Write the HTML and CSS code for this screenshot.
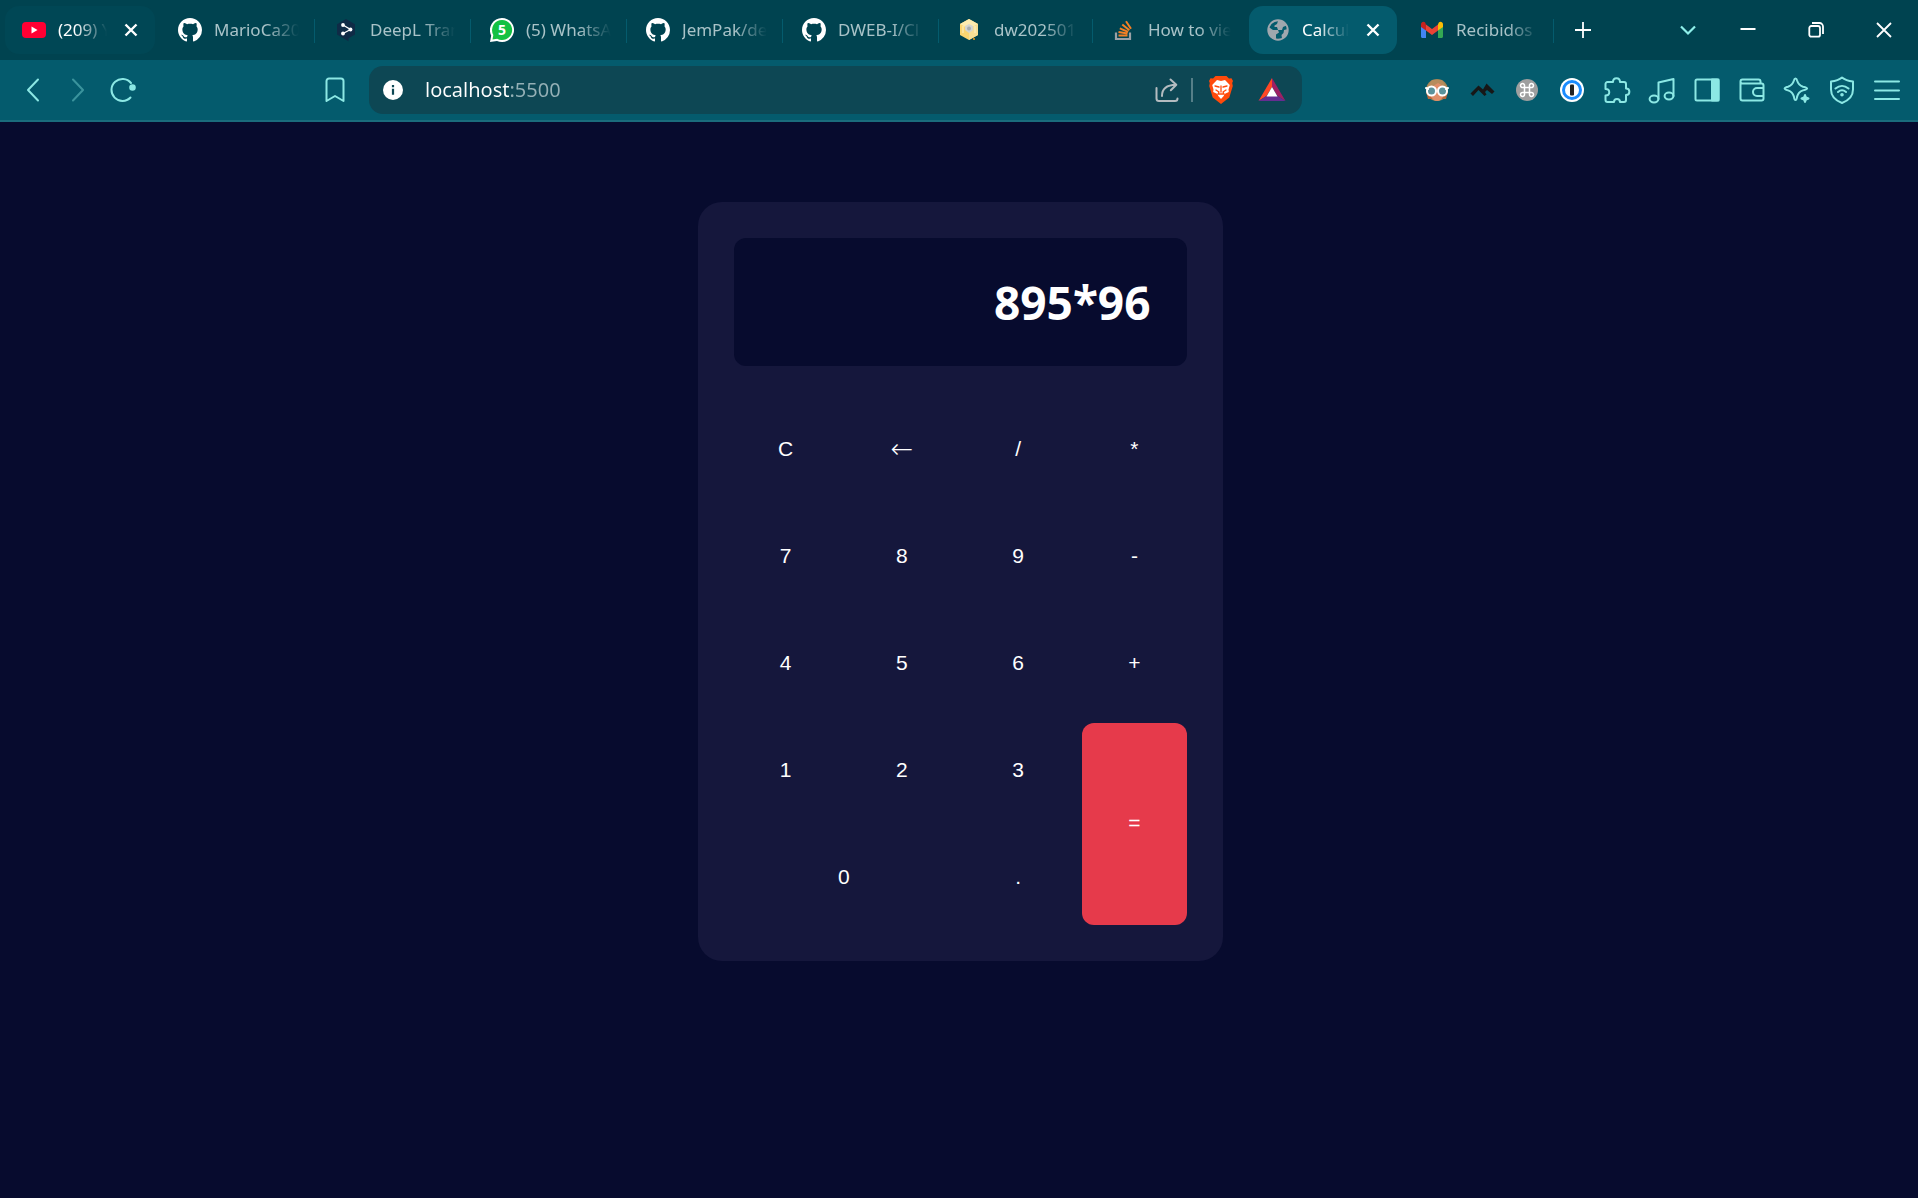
FILE: index.html
```html
<!DOCTYPE html>
<html lang="es">
<head>
<meta charset="utf-8">
<meta name="viewport" content="width=device-width, initial-scale=1">
<title>Calculadora</title>
<link rel="stylesheet" href="styles.css">
</head>
<body>
<svg class="symbols" aria-hidden="true">
  <symbol id="github" viewBox="0 0 16 16"><path fill="#fff" d="M8 0C3.58 0 0 3.58 0 8c0 3.54 2.29 6.53 5.47 7.59.4.07.55-.17.55-.38 0-.19-.01-.82-.01-1.49-2.01.37-2.53-.49-2.69-.94-.09-.23-.48-.94-.82-1.13-.28-.15-.68-.52-.01-.53.63-.01 1.08.58 1.23.82.72 1.21 1.87.87 2.33.66.07-.52.28-.87.51-1.07-1.78-.2-3.64-.89-3.64-3.95 0-.87.31-1.59.82-2.15-.08-.2-.36-1.02.08-2.12 0 0 .67-.21 2.2.82.64-.18 1.32-.27 2-.27s1.36.09 2 .27c1.53-1.04 2.2-.82 2.2-.82.44 1.1.16 1.92.08 2.12.51.56.82 1.27.82 2.15 0 3.07-1.87 3.75-3.65 3.95.29.25.54.73.54 1.48 0 1.07-.01 1.93-.01 2.2 0 .21.15.46.55.38A8.01 8.01 0 0 0 16 8c0-4.42-3.58-8-8-8z"/></symbol>
  <symbol id="cross" viewBox="0 0 24 24"><path d="M6.500 6.500l11 11M17.500 6.500l-11 11" fill="none" stroke="#fff" stroke-width="2.400"/></symbol>
</svg>

<header class="browser">
  <div class="tabbar">
    <nav class="tabs" aria-label="Pestañas">
      <div class="tab tab-hover">
        <svg class="favicon" viewBox="0 0 24 24"><rect y="4" width="24" height="16" rx="4" fill="#ff0033"/><path d="M9.500 8.500v7l6-3.500z" fill="#fff"/></svg>
        <span class="title">(209) Y</span>
        <button class="close" aria-label="Cerrar"><svg class="favicon"><use href="#cross"/></svg></button>
      </div>
      <div class="tab">
        <svg class="favicon"><use href="#github"/></svg>
        <span class="title">MarioCa20</span>
      </div>
      <div class="tab divided">
        <svg class="favicon" viewBox="0 0 24 24"><path d="M12 1l9 5.200v10.300L14.500 20.200v3L3 16.500V6.200z" fill="#0f2b46"/><path d="M9 7l7.500 4.500L9 15.500" fill="none" stroke="#fff" stroke-width="1.300"/><circle cx="9" cy="7" r="1.900" fill="#fff"/><circle cx="16.500" cy="11.500" r="1.900" fill="#fff"/><circle cx="9" cy="15.500" r="1.900" fill="#fff"/></svg>
        <span class="title">DeepL Tran</span>
      </div>
      <div class="tab divided">
        <svg class="favicon" viewBox="0 0 24 24"><path d="M12 0a12 12 0 1 1-5 22.900L0 24l1.200-6.600A12 12 0 0 1 12 0z" fill="#fff"/><path d="M12 2a10 10 0 1 1-4.800 18.700L2.500 21.500l.8-4.600A10 10 0 0 1 12 2z" fill="#13c143"/><text x="12" y="17" class="badge">5</text></svg>
        <span class="title">(5) WhatsA</span>
      </div>
      <div class="tab divided">
        <svg class="favicon"><use href="#github"/></svg>
        <span class="title">JemPak/de</span>
      </div>
      <div class="tab divided">
        <svg class="favicon"><use href="#github"/></svg>
        <span class="title">DWEB-I/Cl</span>
      </div>
      <div class="tab divided">
        <svg class="favicon" viewBox="0 0 24 24"><path d="M11 1l9 5v11l-9 5-9-5V6z" fill="#fbd571"/><path d="M11 1l9 5-9 5-9-5z" fill="#fdebb0"/><path d="M11 11l9-5v11l-9 5z" fill="#f8df95"/><path d="M7 8l4-2 4 2v4l-4 3-4-3z" fill="#d5d5cf"/><circle cx="11" cy="10.500" r="2" fill="#a8adb0"/><path d="M5 8v7M17 8v7" stroke="#fff3c8" stroke-width="1"/><circle cx="16" cy="21" r="1" fill="#f39c12"/></svg>
        <span class="title">dw202501</span>
      </div>
      <div class="tab divided">
        <svg class="favicon" viewBox="0 0 24 24"><path d="M4 14.500V21h14v-6.500" fill="none" stroke="#9aa1a6" stroke-width="2.200"/><path d="M6.500 17.500h9M6.500 14l9 1.500M7.800 10.300l8.300 3.500M10.300 6.500l7 5.800M14 3.200l5 7.500" fill="none" stroke="#f48024" stroke-width="2"/></svg>
        <span class="title">How to vie</span>
      </div>
      <div class="tab tab-active" aria-current="page">
        <svg class="favicon" viewBox="0 0 24 24"><circle cx="12" cy="12" r="9.700" fill="none" stroke="#a0a7ae" stroke-width="2"/><path d="M2.500 9l4.500 3h5l1 2.500-3 2v5C5 21 1.500 16 2.500 9zM14 2.500c3 .5 5.500 2.500 6.500 5L17 9l-1 3h-4l-1-3H8.500V7.500L11 6l1-3z M18 12l4-1c0 4-2 8-6 9.500l-.5-3.500 2-2z" fill="#a0a7ae"/></svg>
        <span class="title">Calcul</span>
        <button class="close" aria-label="Cerrar"><svg class="favicon"><use href="#cross"/></svg></button>
      </div>
      <div class="tab divided">
        <svg class="favicon" viewBox="0 0 24 24"><path d="M1 6v12.500c0 .8.600 1.500 1.500 1.500H6V10z" fill="#4285f4"/><path d="M23 6v12.500c0 .8-.6 1.500-1.500 1.500H18V10z" fill="#34a853"/><path d="M18 6.300V12.500L23 9V6.200c0-2.400-2.600-3.200-4-2z" fill="#fbbc04"/><path d="M6 12.500V6.500l6 4.500 6-4.500v6L12 17z" fill="#ea4335"/><path d="M1 6.200V9l5 3.500V6.500L5 4.200C3.400 3 1 3.800 1 6.200z" fill="#c5221f"/></svg>
        <span class="title">Recibidos</span>
      </div>
    </nav>
    <button class="new-tab" aria-label="Nueva pestaña"><svg class="glyph" viewBox="0 0 24 24"><path d="M12 4v16M4 12h16" stroke="#fff" stroke-width="1.800"/></svg></button>
    <div class="window-controls">
      <button class="tab-search" aria-label="Buscar pestañas"><svg class="glyph" viewBox="0 0 24 24"><path d="M5 8.500l7 7 7-7" fill="none" stroke="#8ff0ea" stroke-width="2.200"/></svg></button>
      <button class="control" aria-label="Minimizar"><svg class="glyph" viewBox="0 0 24 24"><path d="M4.500 11h15" stroke="#fff" stroke-width="2"/></svg></button>
      <button class="control" aria-label="Restaurar"><svg class="glyph" viewBox="0 0 24 24" fill="none" stroke="#fff" stroke-width="1.800"><rect x="5.300" y="8" width="10.700" height="10.700" rx="2"/><path d="M8 5h7.500A3.500 3.500 0 0 1 19 8.500V16"/></svg></button>
      <button class="control" aria-label="Cerrar ventana"><svg class="glyph" viewBox="0 0 24 24"><path d="M5 5l14 14M19 5L5 19" stroke="#fff" stroke-width="1.800"/></svg></button>
    </div>
  </div>

  <div class="toolbar">
    <div class="group">
      <button class="tool" aria-label="Atrás"><svg class="icon" viewBox="0 0 28 28"><path d="M19 3.500L9 14l10 10.500"/></svg></button>
      <button class="tool dim" aria-label="Adelante"><svg class="icon" viewBox="0 0 28 28"><path d="M9 3.500L19 14 9 24.500"/></svg></button>
      <button class="tool" aria-label="Recargar"><svg class="icon" viewBox="0 0 28 28"><path d="M22 7A11 11 0 1 0 21.500 21.500"/><circle cx="23.500" cy="11.500" r="2.300" class="solid"/></svg></button>
    </div>
    <div class="location">
      <button class="tool" aria-label="Marcador"><svg class="icon" viewBox="0 0 28 28"><path d="M5.500 25V5a2.500 2.500 0 0 1 2.500-2.500h12A2.500 2.500 0 0 1 22.500 5v20L14 20z"/></svg></button>
      <div class="address">
        <svg class="info" viewBox="0 0 20 20"><circle cx="10" cy="10" r="10" fill="#fff"/><path d="M10 8.800v6M10 5v2.200" stroke="#0d4754" stroke-width="2.200"/></svg>
        <input class="url" type="text" value="localhost:5500" aria-label="Dirección">
        <button class="share" aria-label="Compartir"><svg class="icon" viewBox="0 0 28 28"><path d="M3.500 12v10.500A2.500 2.500 0 0 0 6 25h16a2.500 2.500 0 0 0 2.500-2.500M9 20c0-7 4.500-11 14-11.200M17.500 3.500l5.800 5.300-5.500 5.500"/></svg></button>
        <span class="rule"></span>
        <button class="badge-button" aria-label="Brave Shields"><svg class="icon" viewBox="0 0 28 28"><path class="plain" d="M8.500 0h11l2.500 2.500 2.500-.2L26 5l-.8 2 .6 3-3.500 11.500L14 28 5.700 21.500 2.200 10l.6-3L2 5l1.500-2.700 2.500.2z" fill="#ff4a0b"/><path class="plain" d="M14 5l4-1 4.800 5-1.300 4.500.3 2.500-4.300 2-.8 2-2.700 3-2.700-3-.8-2-4.300-2 .3-2.500L5.200 9 10 4z" fill="#fff"/><path d="M8 10l4 1M20 10l-4 1M14 10v6M9 14l3 2-1 2h6l-1-2 3-2" stroke="#ff4a0b" stroke-width="1.300"/></svg></button>
        <button class="badge-button" aria-label="Recompensas"><svg class="icon" viewBox="0 0 28 28"><path class="plain" d="M14 2L.5 25l8-5L14 11z" fill="#ff4724"/><path class="plain" d="M14 2l13.500 23-8-5L14 11z" fill="#9e1f63"/><path class="plain" d="M.5 25h27l-8-5h-11z" fill="#662d91"/><path class="plain" d="M14 11l5.500 9.500h-11z" fill="#fff"/></svg></button>
      </div>
    </div>
    <div class="group">
      <button class="tool" aria-label="Extensión de lectura"><svg class="icon" viewBox="0 0 28 28"><circle class="plain" cx="14" cy="14" r="11" fill="#a98656"/><path class="plain" d="M3 16l2 7h5l-3-8zM25 16l-2 7h-5l3-8z" fill="#b5683d"/><path class="plain" d="M14 6c6 3 9 8 7 13-2 4-4 6-7 6s-5-2-7-6c-1-5 2-9 7-13z" fill="#e08e69"/><path class="plain" d="M9 4h10l4 7-8-4-8 5-3-1z" fill="#b68c5c"/><circle class="plain" cx="8.500" cy="15" r="4.500" fill="#5a929b"/><circle class="plain" cx="19.500" cy="15" r="4.500" fill="#5a929b"/><circle cx="8.500" cy="15" r="4.500" stroke="#fff"/><circle cx="19.500" cy="15" r="4.500" stroke="#fff"/><path d="M3 12l2 1M25 12l-2 1" stroke="#fff"/></svg></button>
      <button class="tool" aria-label="Extensión de montañas"><svg class="icon" viewBox="0 0 28 28"><path class="plain" d="M2.500 17.500l8-8 4.500 4 3.500-6 8 8-2.500 2.500-5-4-2 2 1.500 2.500-2 1.500-6-6-5.500 6z" fill="#171717"/></svg></button>
      <button class="tool" aria-label="Extensión de comandos"><svg class="icon" viewBox="0 0 28 28"><circle class="plain" cx="14" cy="14" r="11" fill="#9f9f9f"/><path d="M11.500 11.500h5v5h-5zM11.500 11.500H9.800a2 2 0 1 1 1.700-1.700zM16.500 11.500V9.800a2 2 0 1 1 1.700 1.700zM16.500 16.500h1.700a2 2 0 1 1-1.700 1.700zM11.500 16.500v1.700a2 2 0 1 1-1.700-1.700z" stroke="#fff" stroke-width="1.500"/></svg></button>
      <button class="tool" aria-label="Gestor de contraseñas"><svg class="icon" viewBox="0 0 28 28"><circle class="plain" cx="14" cy="14" r="12" fill="#fff"/><circle cx="14" cy="14" r="8.500" stroke="#1a8cff" stroke-width="3"/><rect class="plain" x="12" y="8.500" width="4" height="11" rx="1" fill="#222"/></svg></button>
      <button class="tool" aria-label="Extensiones"><svg class="icon" viewBox="0 0 28 28"><path d="M4.500 6H10c0-5 7-5 7 0h4a2 2 0 0 1 2 2v4.500c4.500 0 4.500 6.500 0 6.500v5a2 2 0 0 1-2 2h-4c0-4-6-4-6 0H4.500a2 2 0 0 1-2-2v-4.500c5 0 5-6.500 0-6.500V8a2 2 0 0 1 2-2z"/></svg></button>
      <button class="tool" aria-label="Música"><svg class="icon" viewBox="0 0 28 28"><path d="M10.500 23V6.500L25.500 3v17"/><ellipse cx="6" cy="23" rx="4.400" ry="3.400"/><ellipse cx="21" cy="20" rx="4.400" ry="3.400"/></svg></button>
      <button class="tool" aria-label="Panel lateral"><svg class="icon" viewBox="0 0 28 28"><rect x="2.500" y="3.500" width="23" height="21" rx="1.500"/><path class="solid" d="M19 3.500h6.500v21H19z"/></svg></button>
      <button class="tool" aria-label="Cartera"><svg class="icon" viewBox="0 0 28 28"><path d="M22.500 7V5.500a2 2 0 0 0-2-2H4.500a2 2 0 0 0 0 4h19a2 2 0 0 1 2 2v13a2 2 0 0 1-2 2h-19a2 2 0 0 1-2-2V5.500M25.500 12H19a4 4 0 0 0 0 8h6.500"/></svg></button>
      <button class="tool" aria-label="Asistente"><svg class="icon" viewBox="0 0 28 28"><path d="M12.500 2.500c1 0 1.300.8 1.600 2 1.100 3.800 2.400 5 5.900 6.200 5.500 1.300 5.500 2.400 0 3.700-3.500 1.200-4.800 2.400-5.900 6.200-.6 4.500-2.600 4.500-3.200 0-1.100-3.800-2.400-5-5.900-6.200-4.500-1.300-4.500-2.400 0-3.700 3.500-1.200 4.800-2.400 5.900-6.200.3-1.200.6-2 1.600-2z"/><path class="solid" d="M22 19l1 2.500 2.500 1-2.500 1-1 2.500-1-2.500-2.500-1 2.500-1z"/></svg></button>
      <button class="tool" aria-label="VPN"><svg class="icon" viewBox="0 0 28 28"><path d="M14 1.500C17 4 20.500 5 25 5.500v8C25 20 20.500 24.500 14 27 7.500 24.500 3 20 3 13.500v-8C7.500 5 11 4 14 1.500zM7.500 12.500c4-3.500 9-3.500 13 0M10 16c2.500-2.200 5.500-2.200 8 0"/><circle class="solid" cx="14" cy="18.800" r=".8"/></svg></button>
      <button class="tool" aria-label="Menú"><svg class="icon" viewBox="0 0 28 28"><path d="M2 5.500h24M2 14.500h24M2 23h24"/></svg></button>
    </div>
  </div>
</header>

<main class="page">
  <section class="calculator" aria-label="Calculadora">
    <output class="screen">895*96</output>
    <div class="keys">
      <button class="key">C</button>
      <button class="key key-back">←</button>
      <button class="key">/</button>
      <button class="key">*</button>
      <button class="key">7</button>
      <button class="key">8</button>
      <button class="key">9</button>
      <button class="key">-</button>
      <button class="key">4</button>
      <button class="key">5</button>
      <button class="key">6</button>
      <button class="key">+</button>
      <button class="key">1</button>
      <button class="key">2</button>
      <button class="key">3</button>
      <button class="key key-equals">=</button>
      <button class="key key-zero">0</button>
      <button class="key">.</button>
    </div>
  </section>
</main>
</body>
</html>
```
FILE: styles.css
```css
* {
  box-sizing: border-box;
}

body {
  margin: 0;
  min-height: 100vh;
  display: flex;
  flex-direction: column;
  background: #070b2e;
  color: #fff;
  font-family: "Noto Sans", "Open Sans", sans-serif;
}

button {
  padding: 0;
  border: 0;
  background: none;
  color: inherit;
  cursor: pointer;
  display: grid;
  place-items: center;
}

.symbols {
  display: none;
}

/* Tab strip */

.tabbar {
  display: flex;
  height: 60px;
  padding-left: 2px;
  background: #004350;
}

.tabs {
  flex: 0 1 1552px;
  min-width: 0;
  display: grid;
  grid-template-columns: repeat(6, minmax(0, 156fr)) repeat(4, minmax(0, 154fr));
  align-items: center;
}

.tab {
  position: relative;
  display: flex;
  align-items: center;
  gap: 12px;
  height: 48px;
  margin: 0 3px;
  padding: 0 12px 0 17px;
  border-radius: 14px;
  color: #a9c3c8;
  font-size: 17px;
  line-height: 24px;
}

.tab-hover {
  background: #004755;
  color: #fff;
}

.tab-active {
  background: #045b6d;
  color: #fff;
}

.divided::before,
.divided:last-child::after {
  content: "";
  position: absolute;
  top: 13px;
  left: -3px;
  width: 1px;
  height: 24px;
  background: #045b6d;
}

.tab-active + .divided::before {
  display: none;
}

.divided:last-child::after {
  left: auto;
  right: -3px;
}

.favicon {
  flex: none;
  display: block;
  width: 24px;
  height: 24px;
}

.title {
  flex: 1;
  min-width: 0;
  overflow: hidden;
  white-space: nowrap;
  mask-image: linear-gradient(to left, transparent, #000 32px);
}

.badge {
  fill: #fff;
  font-size: 14px;
  font-weight: 700;
  text-anchor: middle;
}

.new-tab {
  width: 58px;
}

.window-controls {
  display: flex;
  margin-left: auto;
}

.tab-search {
  width: 52px;
}

.control {
  width: 68px;
}

.glyph {
  width: 24px;
  height: 24px;
}

/* Toolbar */

.toolbar {
  display: flex;
  align-items: center;
  height: 62px;
  padding: 0 9px 0 10px;
  background: #045b6d;
  border-bottom: 2px solid #1a6c7c;
}

.group {
  flex: none;
  display: flex;
}

.tool {
  flex: none;
  width: 45px;
  height: 48px;
}

.dim {
  opacity: 0.4;
}

.icon {
  width: 28px;
  height: 28px;
  fill: none;
  stroke: #8ce8e4;
  stroke-width: 2;
  stroke-linecap: round;
  stroke-linejoin: round;
}

.icon .solid {
  fill: #8ce8e4;
}

.icon .plain {
  stroke: none;
}

.location {
  flex: 1;
  min-width: 0;
  display: flex;
  gap: 12px;
  margin: 0 112px 0 167px;
}

.address {
  flex: 1;
  min-width: 0;
  display: flex;
  align-items: center;
  height: 48px;
  padding: 0 16px 0 14px;
  border-radius: 14px;
  background: #0d4754;
}

.info {
  flex: none;
  width: 20px;
  height: 20px;
}

.url {
  flex: 1;
  min-width: 0;
  margin-left: 22px;
  padding: 0;
  border: 0;
  outline: 0;
  background: linear-gradient(to right, #fff 85px, #94b0b6 85px);
  background-clip: text;
  color: transparent;
  font: 20px/28px "Noto Sans", "Open Sans", sans-serif;
}

.share .icon {
  stroke: #b4bcc0;
}

.rule {
  width: 2px;
  height: 24px;
  margin: 0 14px 0 10px;
  background: #567f88;
}

.badge-button + .badge-button {
  margin-left: 23px;
}

/* Calculator */

.page {
  flex: 1;
  padding: 80px 16px 80px 18px;
}

.calculator {
  max-width: 525px;
  margin: 0 auto;
  padding: 36px;
  border-radius: 24px;
  background: #15173c;
}

.screen {
  display: block;
  padding: 32px 36px;
  border-radius: 12px;
  background: #070b2e;
  font-size: 46px;
  font-weight: 700;
  line-height: 64px;
  text-align: right;
}

.keys {
  display: grid;
  grid-template-columns: repeat(4, 1fr);
  grid-auto-rows: 95px;
  gap: 12px;
  margin-top: 36px;
}

.key {
  padding-bottom: 2px;
  border-radius: 12px;
  font: 21px/24px "Liberation Sans", Arial, sans-serif;
}

.key-back {
  font: 200 27px/24px "DejaVu Sans", sans-serif;
}

.key-zero {
  grid-column: span 2;
}

.key-equals {
  grid-area: 4 / 4 / span 2;
  background: #e63a4b;
}
```
